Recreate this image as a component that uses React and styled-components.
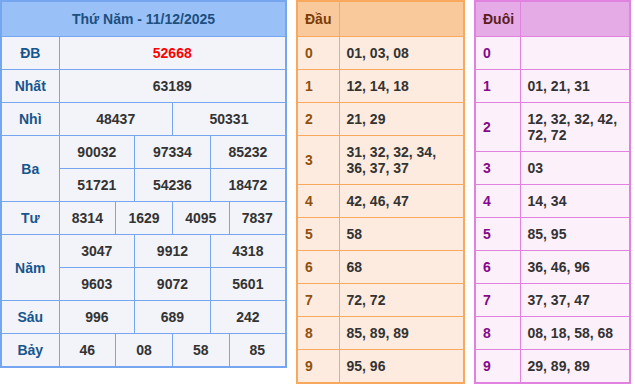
import styled, { createGlobalStyle } from 'styled-components';

const GlobalStyle = createGlobalStyle`
  body {
    margin: 0;
    background: #fff;
    font-family: "Liberation Sans", Arial, sans-serif;
  }
`;

const Page = styled.div`
  display: flex;
  align-items: flex-start;
  gap: 9px;
`;

const Table = styled.table`
  border-collapse: collapse;
  table-layout: fixed;
  width: ${(p) => p.$width}px;
  border: 2px solid ${(p) => p.$border};
  background: ${(p) => p.$bg};
  font-size: 14px;
  font-weight: bold;
  line-height: 16px;
  color: #333;

  td,
  th {
    border: 1px solid ${(p) => p.$border};
    padding: 8px 7px;
    overflow: hidden;
  }
`;

const Title = styled.th`
  background: #9ac1f7;
  color: #1d4f80;
  text-align: center;
  height: 18px;
`;

const Label = styled.td`
  color: #17558e;
  text-align: center;
`;

const Num = styled.td`
  text-align: center;
  color: ${(p) => (p.$special ? '#f00' : '#333')};
`;

const HeadCell = styled.th`
  background: ${(p) => p.$bg};
  color: ${(p) => p.$color};
  text-align: left;
  height: 18px;
`;

const Key = styled.td`
  color: ${(p) => p.$color};
`;

const prizes = [
  { name: 'ĐB', rows: [['52668']], special: true },
  { name: 'Nhất', rows: [['63189']] },
  { name: 'Nhì', rows: [['48437', '50331']] },
  {
    name: 'Ba',
    rows: [
      ['90032', '97334', '85232'],
      ['51721', '54236', '18472'],
    ],
  },
  { name: 'Tư', rows: [['8314', '1629', '4095', '7837']] },
  {
    name: 'Năm',
    rows: [
      ['3047', '9912', '4318'],
      ['9603', '9072', '5601'],
    ],
  },
  { name: 'Sáu', rows: [['996', '689', '242']] },
  { name: 'Bảy', rows: [['46', '08', '58', '85']] },
];

const dau = [
  '01, 03, 08',
  '12, 14, 18',
  '21, 29',
  '31, 32, 32, 34, 36, 37, 37',
  '42, 46, 47',
  '58',
  '68',
  '72, 72',
  '85, 89, 89',
  '95, 96',
];

const duoi = [
  '',
  '01, 21, 31',
  '12, 32, 32, 42, 72, 72',
  '03',
  '14, 34',
  '85, 95',
  '36, 46, 96',
  '37, 37, 47',
  '08, 18, 58, 68',
  '29, 89, 89',
];

function ResultTable() {
  return (
    <Table $width={287} $border="#76a6f0" $bg="#f3f4f9">
      <colgroup>
        <col style={{ width: 58 }} />
        {Array.from({ length: 12 }).map((_, i) => (
          <col key={i} />
        ))}
      </colgroup>
      <tbody>
        <tr>
          <Title colSpan={13}>Thứ Năm - 11/12/2025</Title>
        </tr>
        {prizes.map((prize) =>
          prize.rows.map((row, ri) => (
            <tr key={prize.name + ri}>
              {ri === 0 && <Label rowSpan={prize.rows.length}>{prize.name}</Label>}
              {row.map((n, i) => (
                <Num key={i} colSpan={12 / row.length} $special={prize.special}>
                  {n}
                </Num>
              ))}
            </tr>
          ))
        )}
      </tbody>
    </Table>
  );
}

function LotoTable({ title, data, width, keyWidth, border, head, bg, titleColor, keyColor }) {
  return (
    <Table $width={width} $border={border} $bg={bg}>
      <colgroup>
        <col style={{ width: keyWidth }} />
        <col />
      </colgroup>
      <tbody>
        <tr>
          <HeadCell $bg={head} $color={titleColor}>
            {title}
          </HeadCell>
          <HeadCell $bg={head} />
        </tr>
        {data.map((v, i) => (
          <tr key={i}>
            <Key $color={keyColor}>{i}</Key>
            <td>{v}</td>
          </tr>
        ))}
      </tbody>
    </Table>
  );
}

export default function App() {
  return (
    <>
      <GlobalStyle />
      <Page>
        <ResultTable />
        <LotoTable
          title="Đầu"
          data={dau}
          width={169}
          keyWidth={42}
          border="#f8a95e"
          head="#f9c99b"
          bg="#fdebdf"
          titleColor="#7a3c08"
          keyColor="#91500f"
        />
        <LotoTable
          title="Đuôi"
          data={duoi}
          width={157}
          keyWidth={45}
          border="#e282e0"
          head="#e4abe7"
          bg="#fcf0fa"
          titleColor="#5c1c1c"
          keyColor="#850a8a"
        />
      </Page>
    </>
  );
}
